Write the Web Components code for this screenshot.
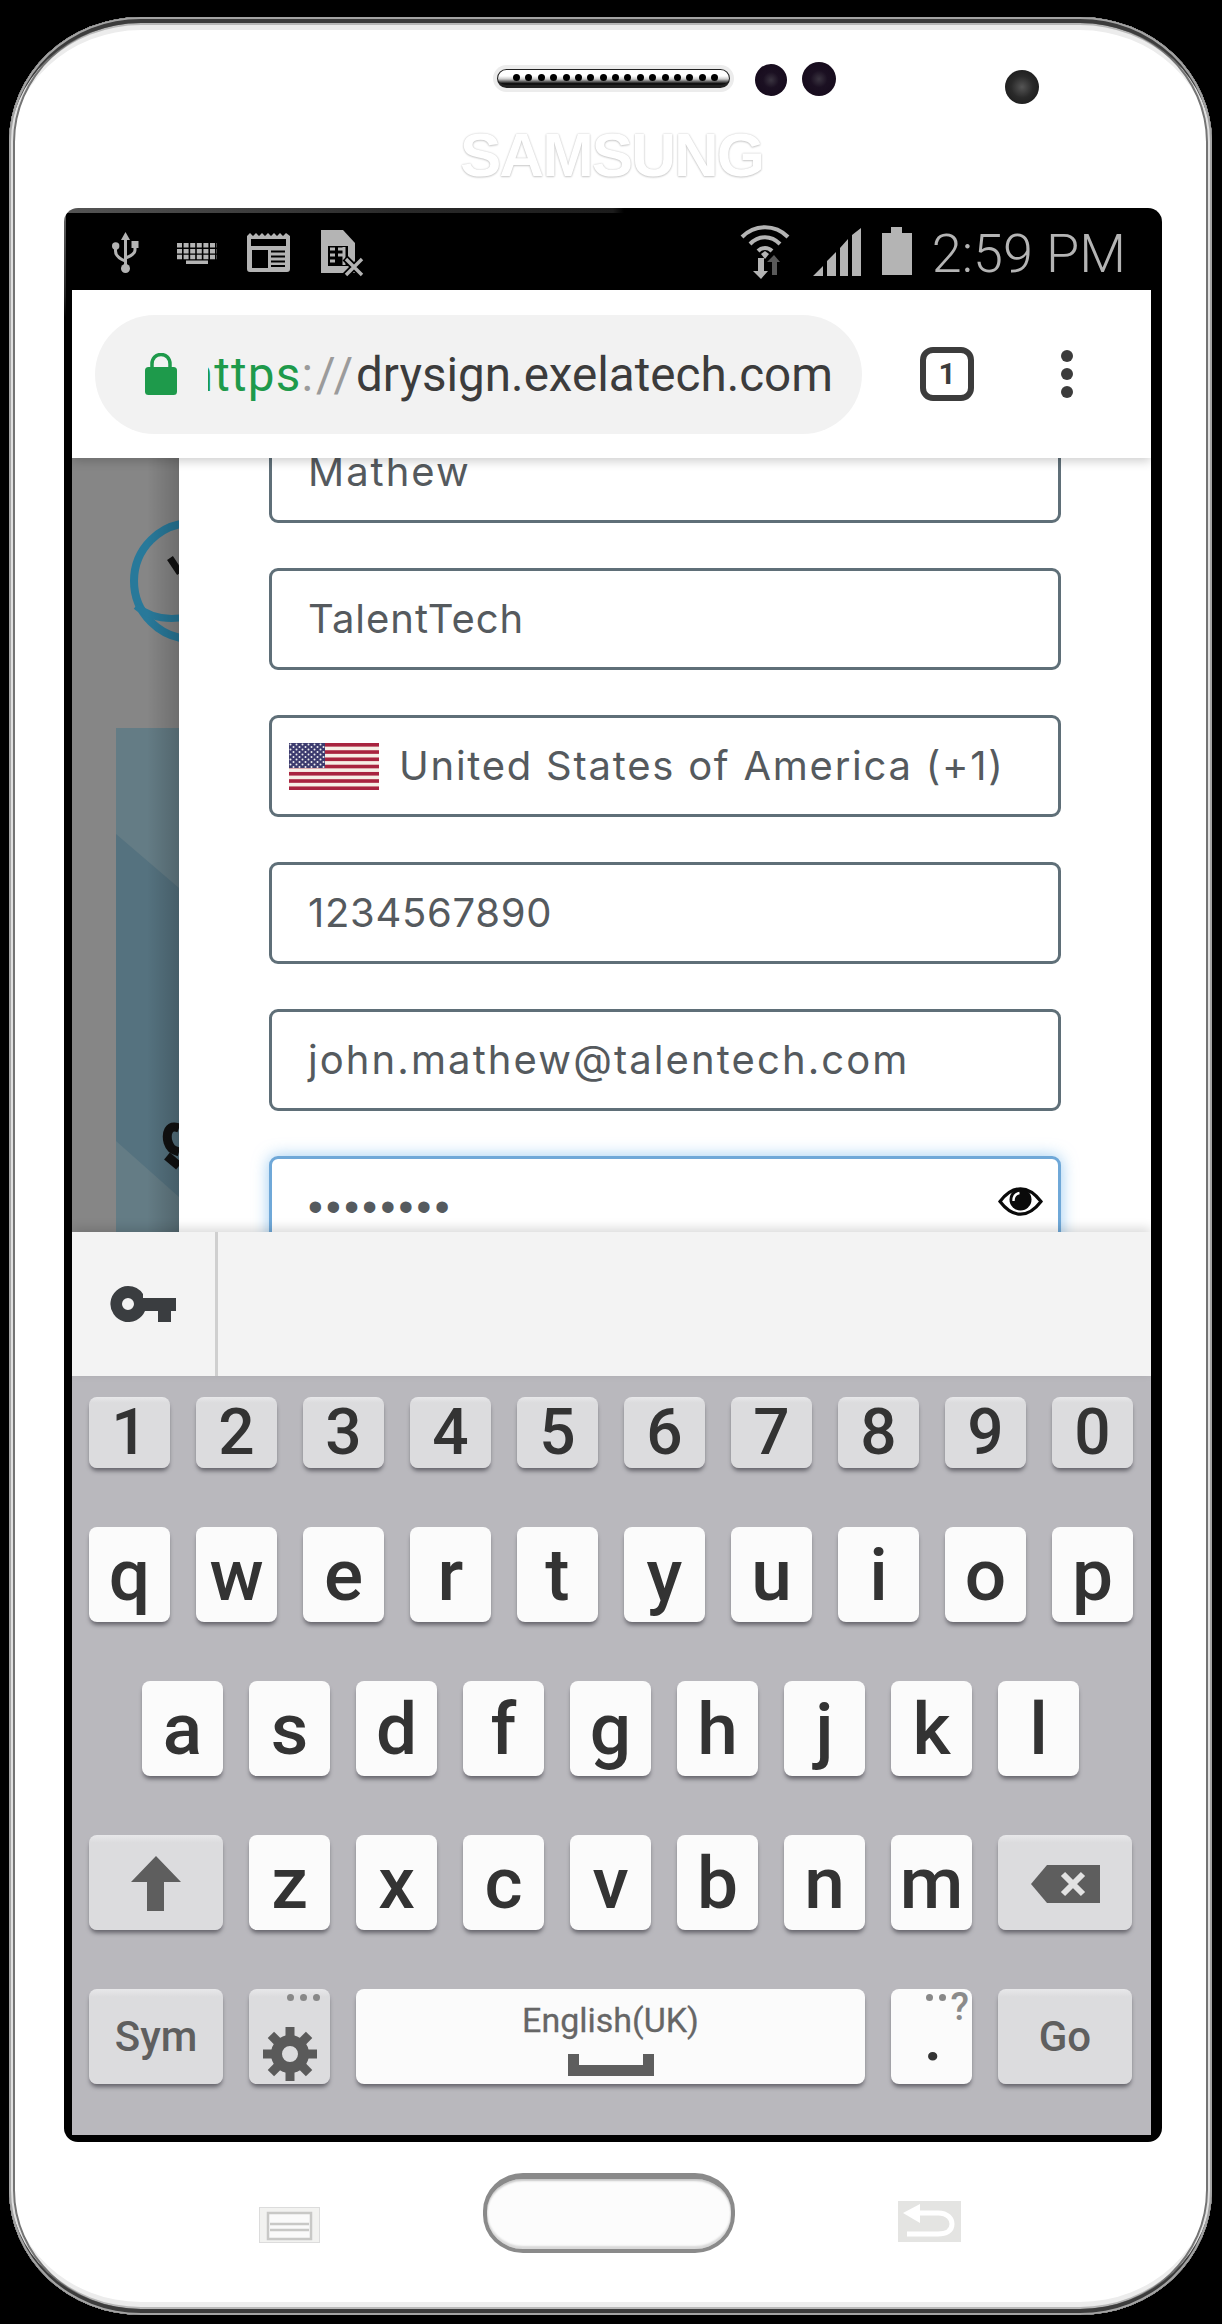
<!DOCTYPE html>
<html>
<head>
<meta charset="utf-8">
<style>
  html, body { margin: 0; background: #000; }
  body { padding: 17px 0 0 9px; height: 2307px; overflow: hidden; }
</style>
</head>
<body>
<phone-frame>
  <top-bezel slot="top"></top-bezel>
  <status-bar slot="screen"></status-bar>
  <browser-bar slot="screen"></browser-bar>
  <web-page slot="screen">
    <form-field style="letter-spacing:2px">Mathew</form-field>
    <form-field style="letter-spacing:1px">TalentTech</form-field>
    <form-field style="letter-spacing:1.75px"><us-flag slot="lead"></us-flag>United States of America (+1)</form-field>
    <form-field style="letter-spacing:0.7px">1234567890</form-field>
    <form-field style="letter-spacing:2.1px">john.mathew@talentech.com</form-field>
    <form-field focused secret>&#8226;&#8226;&#8226;&#8226;&#8226;&#8226;&#8226;&#8226;<eye-icon slot="trail"></eye-icon></form-field>
  </web-page>
  <suggest-bar slot="screen"></suggest-bar>
  <key-board slot="screen"></key-board>
  <bottom-bezel slot="bottom"></bottom-bezel>
</phone-frame>

<script>
class PhoneFrame extends HTMLElement {
    constructor() {
        super();
        this.attachShadow({ mode: 'open' });
        this.shadowRoot.innerHTML = `
        <style>
            :host {
                display: block;
                box-sizing: border-box;
                width: 1203px;
                height: 2298px;
                padding: 0 50px 0 55px;
                background: #fff;
                border-radius: 132px / 125px;
                box-shadow: inset 0 0 0 2px #a4a4a4,
                            inset 0 6px 0 0 #3c3c3c, inset 0 -6px 0 0 #3c3c3c,
                            inset 0 0 0 4px #e0e0e0, inset 0 0 0 6px #747474,
                            inset 0 8px 0 0 #b8b8b8, inset 0 -8px 0 0 #b8b8b8,
                            inset 0 13px 0 0 #ececec, inset 0 -13px 0 0 #ececec;
            }
            .screen {
                display: flex;
                flex-direction: column;
                width: 1098px;
                box-sizing: border-box;
                padding: 0 11px 7px 8px;
                border-radius: 14px;
                background:
                    linear-gradient(90deg, #555, #2a2a2a 30%, #1c1c1c 50%, #000 51%) 0 0 / 100% 5px no-repeat,
                    linear-gradient(#666, #222 80%, #000) 0 0 / 2px 110px no-repeat,
                    #000;
            }
        </style>
        <slot name="top"></slot>
        <div class="screen"><slot name="screen"></slot></div>
        <slot name="bottom"></slot>`;
    }
}
customElements.define( 'phone-frame', PhoneFrame );

class TopBezel extends HTMLElement {
    constructor() {
        super();
        this.attachShadow({ mode: 'open' });
        const holes = Array.from({ length: 17 }, () => '<i></i>').join('');
        this.shadowRoot.innerHTML = `
        <style>
            :host { display: block; height: 191px; padding-top: 45px; box-sizing: border-box; }
            .row { display: flex; align-items: flex-start; padding-left: 429px; }
            .speaker {
                box-sizing: border-box;
                width: 241px; height: 27px;
                margin-top: 3px; padding: 4px;
                border-radius: 14px;
                background: #ececec;
            }
            .grill {
                display: flex;
                justify-content: space-between;
                box-sizing: border-box;
                height: 19px;
                padding: 4px 11px 0 15px;
                border: 1px solid #222;
                border-bottom-width: 3px;
                border-radius: 10px;
                background: linear-gradient(#fff 40%, #ccc 60%, #111 90%);
            }
            .grill i { width: 7px; height: 7px; border-radius: 50%; background: #000; }
            .cam { border-radius: 50%; background: radial-gradient(circle, #3a3440 0, #1b1022 35%, #14091a 100%); }
            .c1 { width: 32px; height: 32px; margin: 2px 0 0 21px; }
            .c2 { width: 34px; height: 34px; margin-left: 15px; }
            .c3 { width: 34px; height: 34px; margin: 8px 0 0 169px; background: radial-gradient(circle, #555 0, #2a2a2a 45%, #151515 100%); }
            .brand {
                margin: 28px 0 0 396px;
                font: 700 62px/45px "Liberation Sans", sans-serif;
                letter-spacing: -2px;
                color: #fff;
                text-shadow: 0 0 2px #c4c4c4, 0 1px 2px #d0d0d0;
            }
        </style>
        <div class="row">
            <div class="speaker"><div class="grill">${holes}</div></div>
            <div class="cam c1"></div>
            <div class="cam c2"></div>
            <div class="cam c3"></div>
        </div>
        <div class="brand">SAMSUNG</div>`;
    }
}
customElements.define( 'top-bezel', TopBezel );

class StatusBar extends HTMLElement {
    constructor() {
        super();
        this.attachShadow({ mode: 'open' });
        this.shadowRoot.innerHTML = `
        <style>
            :host {
                display: flex;
                align-items: flex-start;
                height: 82px;
                padding: 0 25px 0 40px;
                color: #b4b4b4;
                box-sizing: border-box;
            }
            svg { display: block; flex: none; }
            .time { margin: 15px 0 0 20px; font: 300 54px/62px Roboto, sans-serif; white-space: nowrap; }
        </style>
        <svg width="27" height="41" viewBox="0 0 27 41" style="margin-top:24px">
            <path d="M13.5 0L18 8H9Z" fill="#b4b4b4"/>
            <path d="M13.5 6V36M13.5 29C8 27 3.5 24 3.5 19V15M13.5 26C19 24 23 22 23 18V13" fill="none" stroke="#b4b4b4" stroke-width="3"/>
            <circle cx="13.5" cy="36.5" r="4.5" fill="#b4b4b4"/>
            <circle cx="3.7" cy="14" r="3.7" fill="#b4b4b4"/>
            <rect x="19.5" y="9" width="7" height="7" fill="#b4b4b4"/>
        </svg>
        <svg width="40" height="21" viewBox="0 0 40 21" style="margin:35px 0 0 38px">
            <g stroke="#b4b4b4" fill="none" stroke-width="4.5" stroke-dasharray="5 1.6">
                <path d="M0 2.2H40"/><path d="M0 8.2H40"/><path d="M0 14H40"/>
            </g>
            <rect x="9" y="17.5" width="22" height="3.5" fill="#b4b4b4"/>
        </svg>
        <svg width="43" height="39" viewBox="0 0 43 39" style="margin:25px 0 0 30px">
            <path d="M0 3L3 0L6 3L9 0L12 3L15 0L18 3L21 0L24 3L27 0L30 3L33 0L36 3L39 0L43 3V36Q43 39 40 39H3Q0 39 0 36Z" fill="#b4b4b4"/>
            <rect x="4" y="6" width="35" height="7" fill="#000"/>
            <rect x="5" y="17" width="16" height="18" fill="#000"/>
            <path d="M24 18.5H38M24 23.5H38M24 28.5H38M24 33H38" stroke="#000" stroke-width="2"/>
        </svg>
        <svg width="44" height="47" viewBox="0 0 44 47" style="margin:22px 0 0 31px">
            <path d="M0 0H22L34 13V43H0Z" fill="#b4b4b4"/>
            <rect x="7" y="16" width="20" height="20" fill="#000"/>
            <path d="M9 19h5M9 25h5M9 31h5M17 19h5M17 25h5M23 17v18" stroke="#b4b4b4" stroke-width="3"/>
            <path d="M24 28L42 46M42 28L24 46" stroke="#000" stroke-width="7"/>
            <path d="M25 29L41 45M41 29L25 45" stroke="#b4b4b4" stroke-width="3.4"/>
        </svg>
        <svg width="50" height="54" viewBox="0 0 50 54" style="margin:17px 0 0 auto">
            <g fill="none" stroke="#b4b4b4" stroke-linecap="butt">
                <path d="M2 12C15 -1 35 -1 48 12" stroke-width="4"/>
                <path d="M10 19C19 10 31 10 40 19" stroke-width="4"/>
                <path d="M18 26C22 22 28 22 32 26" stroke-width="4"/>
            </g>
            <path d="M25 34L21 29L25 26L29 29Z" fill="#b4b4b4"/>
            <path d="M18 33H24V46H28L21 54L13 46H18Z" fill="#b4b4b4"/>
            <path d="M32 50V37H27L34 30L40 37H37V50Z" fill="#5a5a5a"/>
        </svg>
        <svg width="48" height="48" viewBox="0 0 48 48" style="margin:20px 0 0 23px">
            <path d="M0 48L10 38V48ZM14 48V33L23 24V48ZM27 48V20L35 11V48ZM39 48V7L48 0V48Z" fill="#b4b4b4"/>
        </svg>
        <svg width="30" height="48" viewBox="0 0 30 48" style="margin:19px 0 0 21px">
            <path d="M9 0H20V6H30V48H0V6H9Z" fill="#b4b4b4"/>
        </svg>
        <div class="time">2:59 PM</div>`;
    }
}
customElements.define( 'status-bar', StatusBar );

class BrowserBar extends HTMLElement {
    constructor() {
        super();
        this.attachShadow({ mode: 'open' });
        this.shadowRoot.innerHTML = `
        <style>
            :host {
                display: flex;
                align-items: center;
                position: relative;
                z-index: 2;
                box-sizing: border-box;
                height: 168px;
                padding: 0 0 0 23px;
                background: #fff;
                box-shadow: 0 3px 10px rgba(0,0,0,.2);
            }
            .pill {
                display: flex;
                align-items: center;
                box-sizing: border-box;
                width: 767px;
                height: 119px;
                padding: 0 29px 0 50px;
                border-radius: 60px;
                background: #f2f2f2;
            }
            .url {
                flex: 1;
                margin: 2px 0 0 31px;
                overflow: hidden;
                direction: rtl;
                font: 400 47.6px/64px Roboto, sans-serif;
                white-space: nowrap;
                color: #3c3c3c;
            }
            .url bdi { direction: ltr; }
            .g { color: #1e9a4b; letter-spacing: 1.2px; }
            .s { color: #9b9b9b; letter-spacing: 3px; }
            .tab {
                display: flex;
                align-items: center;
                justify-content: center;
                box-sizing: border-box;
                width: 54px;
                height: 54px;
                margin-left: 58px;
                border: 6px solid #3c3c3c;
                border-radius: 13px;
                font: 700 30px/1 Roboto, sans-serif;
                color: #3c3c3c;
            }
            .dots { display: flex; flex-direction: column; gap: 6px; margin-left: 87px; }
            .dots i { width: 12px; height: 12px; border-radius: 50%; background: #3c3c3c; }
        </style>
        <div class="pill">
            <svg width="32" height="42" viewBox="0 0 32 42">
                <path d="M7 16V11C7 5 11 1.5 16 1.5S25 5 25 11V16" fill="none" stroke="#1e9a4b" stroke-width="3.5"/>
                <rect y="14" width="32" height="28" rx="3.5" fill="#1e9a4b"/>
            </svg>
            <div class="url"><bdi><span class="g">https</span><span class="s">://</span>drysign.exelatech.com</bdi></div>
        </div>
        <div class="tab">1</div>
        <div class="dots"><i></i><i></i><i></i></div>`;
    }
}
customElements.define( 'browser-bar', BrowserBar );

class WebPage extends HTMLElement {
    constructor() {
        super();
        this.attachShadow({ mode: 'open' });
        this.shadowRoot.innerHTML = `
        <style>
            :host { display: flex; height: 774px; overflow: hidden; background: #fff; }
            .back { flex: none; display: block; width: 107px; height: 774px; }
            .modal {
                flex: 1;
                display: flex;
                flex-direction: column;
                gap: 45px;
                margin-top: -37px;
                padding: 0 90px;
                background: #fff;
            }
        </style>
        <svg class="back" viewBox="0 0 107 774">
            <defs>
                <linearGradient id="edge" x1="0" x2="1" y1="0" y2="0">
                    <stop offset="0.7" stop-color="#000" stop-opacity="0"/>
                    <stop offset="1" stop-color="#000" stop-opacity=".18"/>
                </linearGradient>
            </defs>
            <rect width="107" height="774" fill="#868686"/>
            <circle cx="120" cy="123" r="58" fill="none" stroke="#28799a" stroke-width="8"/>
            <path d="M64 148C76 158 90 162 108 160" fill="none" stroke="#28799a" stroke-width="7"/>
            <path d="M98 100L108 115" stroke="#111" stroke-width="7"/>
            <rect x="44" y="270" width="63" height="504" fill="#647c85"/>
            <path d="M44 376L107 430V739L44 683Z" fill="#55727f"/>
            <path d="M107 670C96 666 94 676 96 684C98 690 100 692 107 694" fill="none" stroke="#111" stroke-width="9"/>
            <path d="M95 698L107 708" stroke="#111" stroke-width="9"/>
            <rect width="107" height="774" fill="url(#edge)"/>
        </svg>
        <div class="modal"><slot></slot></div>`;
    }
}
customElements.define( 'web-page', WebPage );

class FormField extends HTMLElement {
    constructor() {
        super();
        this.attachShadow({ mode: 'open' });
        this.shadowRoot.innerHTML = `
        <style>
            :host {
                display: flex;
                align-items: center;
                flex: none;
                box-sizing: border-box;
                height: 102px;
                padding: 0 15px 0 36px;
                border: 3px solid #5f6f78;
                border-radius: 9px;
                background: #fff;
                font: 400 40px/48px Inter, sans-serif;
                color: #555a5e;
                white-space: nowrap;
            }
            :host([focused]) {
                border-color: #6fa8d8;
                box-shadow: 0 0 16px rgba(102,175,233,.65);
            }
            :host([secret]) {
                padding-left: 36px;
                padding-right: 15px;
                justify-content: space-between;
                font-family: "Liberation Sans", sans-serif;
                font-size: 42px;
                letter-spacing: 3.4px;
            }
            ::slotted([slot="lead"]) { margin: 0 20px 0 -19px; }
        </style>
        <slot name="lead"></slot><slot></slot><slot name="trail"></slot>`;
    }
}
customElements.define( 'form-field', FormField );

class UsFlag extends HTMLElement {
    constructor() {
        super();
        this.attachShadow({ mode: 'open' });
        let stripes = '';
        for ( let i = 0; i < 13; i += 2 ) stripes += `<rect y="${ i * 3.62 }" width="90" height="3.62" fill="#a8243f"/>`;
        this.shadowRoot.innerHTML = `
        <style>:host { display: block; width: 90px; height: 47px; flex: none; } svg { display: block; }</style>
        <svg width="90" height="47" viewBox="0 0 90 47">
            <defs>
                <pattern id="stars" width="6" height="5" patternUnits="userSpaceOnUse">
                    <circle cx="1.5" cy="1.5" r="1" fill="#eee"/>
                    <circle cx="4.5" cy="4" r="1" fill="#eee"/>
                </pattern>
            </defs>
            <rect width="90" height="47" fill="#f6efe6"/>
            ${ stripes }
            <rect width="36" height="25" fill="#3c3b6e"/>
            <rect width="36" height="25" fill="url(#stars)"/>
        </svg>`;
    }
}
customElements.define( 'us-flag', UsFlag );

class EyeIcon extends HTMLElement {
    constructor() {
        super();
        this.attachShadow({ mode: 'open' });
        this.shadowRoot.innerHTML = `
        <style>:host { display: block; width: 45px; height: 29px; flex: none; margin-top: -11px; } svg { display: block; }</style>
        <svg width="45" height="29" viewBox="0 0 45 29">
            <path d="M2 14.5C10 4 17 1.8 22.5 1.8S35 4 43 14.5C35 25 28 27.2 22.5 27.2S10 25 2 14.5Z" fill="#fff" stroke="#0a0a0a" stroke-width="3.2"/>
            <circle cx="22.5" cy="12.5" r="11" fill="#0a0a0a"/>
            <path d="M15.5 14C15.5 9.5 18 6.5 21.5 6" fill="none" stroke="#fff" stroke-width="2.4"/>
        </svg>`;
    }
}
customElements.define( 'eye-icon', EyeIcon );

class SuggestBar extends HTMLElement {
    constructor() {
        super();
        this.attachShadow({ mode: 'open' });
        this.shadowRoot.innerHTML = `
        <style>
            :host {
                display: flex;
                position: relative;
                z-index: 2;
                height: 144px;
                background: #f3f3f3;
                box-shadow: 0 -4px 10px rgba(0,0,0,.14);
            }
            .key {
                display: flex;
                align-items: center;
                box-sizing: border-box;
                width: 146px;
                padding: 0 0 0 38px;
                border-right: 3px solid #cfcfcf;
            }
        </style>
        <div class="key">
            <svg width="66" height="36" viewBox="0 0 66 36">
                <path fill-rule="evenodd" d="M18 0A18 18 0 0 1 33 8V12H66V25H61V36H48V25H35A18 18 0 1 1 18 0ZM18 12A6 6 0 1 0 18 24A6 6 0 1 0 18 12Z" fill="#3a3d40"/>
            </svg>
        </div>`;
    }
}
customElements.define( 'suggest-bar', SuggestBar );

class KbKey extends HTMLElement {
    constructor() {
        super();
        this.attachShadow({ mode: 'open' });
        this.shadowRoot.innerHTML = `
        <style>
            :host {
                display: flex;
                align-items: center;
                justify-content: center;
                position: relative;
                flex: none;
                box-sizing: border-box;
                width: 81px;
                height: 95px;
                padding-top: 2px;
                border-radius: 8px;
                background: #fbfbfb;
                box-shadow: 0 4px 4px -1px #66656c;
                font: 500 73px/93px Roboto, sans-serif;
                color: #333;
            }
            :host([fn]) {
                background: linear-gradient(#e8e8ea, #dcdcde 8%, #dcdcde);
                color: #5f5f5f;
            }
            :host([num]) {
                height: 71px;
                padding-top: 0;
                background: linear-gradient(#e8e8ea, #dcdcde 8%, #dcdcde);
                font-size: 64px;
                line-height: 71px;
                color: #333;
            }
            :host([wide]) { width: 134px; }
            :host([label]) { font-size: 42px; padding-top: 0; line-height: 95px; }
            :host([space]) { flex-direction: column; justify-content: flex-start; padding-top: 11px; width: 509px; color: #666; }
        </style>
        <slot></slot>`;
    }
}
customElements.define( 'kb-key', KbKey );

class KeyBoard extends HTMLElement {
    constructor() {
        super();
        this.attachShadow({ mode: 'open' });
        const plain = ( letters ) => [ ...letters ].map( l => `<kb-key>${ l }</kb-key>` ).join('');
        const nums = [ ...'1234567890' ].map( l => `<kb-key num>${ l }</kb-key>` ).join('');
        this.shadowRoot.innerHTML = `
        <style>
            :host {
                display: flex;
                flex-direction: column;
                box-sizing: border-box;
                height: 759px;
                padding: 21px 0 0 17px;
                background: #b9b8bd;
            }
            .row { display: flex; gap: 26px; }
            .r1 { margin-bottom: 59px; }
            .r2 { margin-bottom: 59px; }
            .r3 { margin-bottom: 59px; padding-left: 53px; }
            .r4 { margin-bottom: 59px; }
            svg { display: block; }
            .three {
                position: absolute;
                top: 5px; right: 10px;
                display: flex;
                gap: 6px;
            }
            .three i { width: 7px; height: 7px; border-radius: 50%; background: #888; }
            .gear { margin-top: 32px; }
            .space-label { font: 400 34px/40px Roboto, sans-serif; -webkit-text-stroke: 0.3px #666; }
            .space-bar { margin-top: 14px; }
            .q {
                position: absolute;
                top: -1px; right: 3px;
                font: 500 38px/38px Roboto, sans-serif;
                color: #8b8b8b;
            }
            .dot { font: 700 58px/58px Roboto, sans-serif; margin: 4px 0 0 3px; }
            .two { right: 26px; }
        </style>
        <div class="row r1">${ nums }</div>
        <div class="row r2">${ plain('qwertyuiop') }</div>
        <div class="row r3">${ plain('asdfghjkl') }</div>
        <div class="row r4">
            <kb-key fn wide>
                <svg width="50" height="55" viewBox="0 0 50 55"><path d="M25 0L50 26H33V55H16V26H0Z" fill="#5e5e5e"/></svg>
            </kb-key>
            ${ plain('zxcvbnm') }
            <kb-key fn wide>
                <svg width="69" height="38" viewBox="0 0 69 38">
                    <path d="M16 0H69V38H16L0 19Z" fill="#5e5e5e"/>
                    <path d="M32 9L52 29M52 9L32 29" stroke="#e2e2e2" stroke-width="6"/>
                </svg>
            </kb-key>
        </div>
        <div class="row">
            <kb-key fn wide label>Sym</kb-key>
            <kb-key fn>
                <div class="three"><i></i><i></i><i></i></div>
                <svg class="gear" width="54" height="54" viewBox="-27 -27 54 54">
                    <circle r="13.5" fill="none" stroke="#5a5a5a" stroke-width="11"/>
                    <g fill="#5a5a5a">
                        <rect x="-4.5" y="-27" width="9" height="10"/>
                        <rect x="-4.5" y="-27" width="9" height="10" transform="rotate(45)"/>
                        <rect x="-4.5" y="-27" width="9" height="10" transform="rotate(90)"/>
                        <rect x="-4.5" y="-27" width="9" height="10" transform="rotate(135)"/>
                        <rect x="-4.5" y="-27" width="9" height="10" transform="rotate(180)"/>
                        <rect x="-4.5" y="-27" width="9" height="10" transform="rotate(225)"/>
                        <rect x="-4.5" y="-27" width="9" height="10" transform="rotate(270)"/>
                        <rect x="-4.5" y="-27" width="9" height="10" transform="rotate(315)"/>
                    </g>
                </svg>
            </kb-key>
            <kb-key space>
                <div class="space-label">English(UK)</div>
                <svg class="space-bar" width="86" height="22" viewBox="0 0 86 22"><path d="M0 0H11V11H75V0H86V22H0Z" fill="#5e5e5e"/></svg>
            </kb-key>
            <kb-key>
                <div class="three two"><i></i><i></i></div>
                <div class="q">?</div>
                <div class="dot">.</div>
            </kb-key>
            <kb-key fn wide label>Go</kb-key>
        </div>`;
    }
}
customElements.define( 'key-board', KeyBoard );

class BottomBezel extends HTMLElement {
    constructor() {
        super();
        this.attachShadow({ mode: 'open' });
        this.shadowRoot.innerHTML = `
        <style>
            :host { display: flex; align-items: flex-start; padding-left: 195px; }
            svg { display: block; flex: none; }
            .menu { margin-top: 65px; }
            .home {
                flex: none;
                box-sizing: border-box;
                width: 252px;
                height: 80px;
                margin: 31px 163px 0 163px;
                border: 4px solid #8a8a8a;
                border-top-width: 6px;
                border-radius: 40px / 38px;
                background: #fcfcfc;
                box-shadow: inset 0 2px 2px #c8c8c8, inset 0 -3px 2px #d8d8d8;
            }
            .back { margin-top: 59px; }
        </style>
        <svg class="menu" width="61" height="36" viewBox="0 0 61 36">
            <rect x="0.5" y="0.5" width="60" height="35" fill="#f2f2f0" stroke="#dcdcdc"/>
            <path d="M9 6H52V32H9ZM11 17H50M11 23H50" fill="#fafafa" stroke="#c8c8c6" stroke-width="2.5"/>
        </svg>
        <div class="home"></div>
        <svg class="back" width="63" height="41" viewBox="0 0 63 41">
            <rect width="63" height="41" fill="#e4e4e2"/>
            <path d="M5 12L22 3V22Z" fill="#fff"/>
            <path d="M20 12H40C50 12 54 18 54 23C54 30 48 33 40 33H9" fill="none" stroke="#fff" stroke-width="5"/>
        </svg>`;
    }
}
customElements.define( 'bottom-bezel', BottomBezel );
</script>
</body>
</html>
